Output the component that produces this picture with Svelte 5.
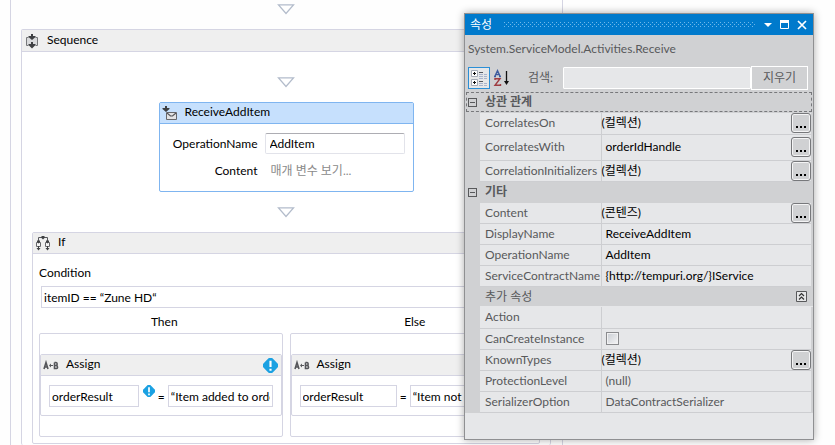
<script>
  const correlation = [
    { name: 'CorrelatesOn', value: '(컬렉션)', flush: true, more: true },
    { name: 'CorrelatesWith', value: 'orderIdHandle', more: true, tall: true },
    { name: 'CorrelationInitializers', value: '(컬렉션)', flush: true, more: true }
  ];
  const misc = [
    { name: 'Content', value: '(콘텐즈)', flush: true, more: true },
    { name: 'DisplayName', value: 'ReceiveAddItem' },
    { name: 'OperationName', value: 'AddItem' },
    { name: 'ServiceContractName', value: '{http://tempuri.org/}IService' }
  ];
  const extra = [
    { name: 'Action', value: '' },
    { name: 'CanCreateInstance', check: true },
    { name: 'KnownTypes', value: '(컬렉션)', flush: true, more: true },
    { name: 'ProtectionLevel', value: '(null)', dim: true },
    { name: 'SerializerOption', value: 'DataContractSerializer', dim: true }
  ];
  const branches = [
    { title: 'Then', to: 'orderResult', value: '“Item added to order”', warn: true },
    { title: 'Else', to: 'orderResult', value: '“Item not added”', warn: false }
  ];
</script>

{#snippet arrow()}
  <svg class="arrow" width="18" height="11" viewBox="0 0 18 11">
    <path d="M1.500 .8H16.500L9 9.500Z" fill="#fff" stroke="#b3bccb" stroke-width="1.300" />
  </svg>
{/snippet}

{#snippet warning(size)}
  <svg width={size} height={size} viewBox="0 0 14 14">
    <path d="M5.500 0h3L10 1.500 12.500 4 14 5.500v3L12.500 10 10 12.500 8.500 14h-3L4 12.500 1.500 10 0 8.500v-3L1.500 4 4 1.500Z" fill="#1ba1e2" />
    <path d="M6 2.500h2v6H6zM6 10h2v2H6z" fill="#fff" />
  </svg>
{/snippet}

{#snippet rows(list)}
  <table>
    <tbody>
      {#each list as p}
        <tr class:tall={p.tall}>
          <th scope="row">{p.name}</th>
          <td class:flush={p.flush} class:dim={p.dim}>
            <div class="cell">
              {#if p.check}
                <input type="checkbox" aria-label={p.name} />
              {:else}
                <span>{p.value}</span>
              {/if}
              {#if p.more}<button class="more" aria-label={p.name}><i></i><i></i><i></i></button>{/if}
            </div>
          </td>
        </tr>
      {/each}
    </tbody>
  </table>
{/snippet}

<main>
  <div class="outer">
    {@render arrow()}
    <section class="box sequence">
      <header>
        <svg width="16" height="16" viewBox="0 0 16 16">
          <path d="M3 4h10v8H3z" fill="#d9dadc" />
          <path d="M4.500 4.500H2.500V12.500H4.500M11.500 4.500H13.500V12.500H11.500" fill="none" stroke="#77787b" />
          <path d="M7 1h2v2h2.500v1L8 7 4.500 4V3H7zM7 9h2v2h2.500v1L8 15.500 4.500 12v-1H7z" fill="#3f4043" />
        </svg>
        <span>Sequence</span>
      </header>
      <div class="flow">
        {@render arrow()}
        <article class="receive">
          <header>
            <svg width="16" height="16" viewBox="0 0 16 16">
              <path d="M4.500 7.500h10v7h-10z" fill="#e3e3e5" stroke="#66676b" />
              <path d="M5 8l3.500 3h2L14 8" fill="none" stroke="#55565a" stroke-width="1.200" />
              <path d="M3 1h2v2h2.500v1L4 7 .5 4V3H3z" fill="#3f4043" />
            </svg>
            <span>ReceiveAddItem</span>
          </header>
          <div class="fields">
            <label for="op">OperationName</label>
            <input id="op" value="AddItem" />
            <span>Content</span>
            <a href="#content">매개 변수 보기...</a>
          </div>
        </article>
        {@render arrow()}
        <section class="box if">
          <header>
            <svg width="16" height="16" viewBox="0 0 16 16">
              <path d="M3.500 6V2.500H12.500V6" fill="none" stroke="#55565a" />
              <path d="M6.500 1h3v2L8 4.500 6.500 3z" fill="#3f4043" />
              <path d="M1.500 7.500h4v4h-4zM10.500 7.500h4v4h-4z" fill="#f4f4f4" stroke="#66676b" />
              <path d="M2 5.500h3v1.500L3.500 8.500 2 7zM11 5.500h3v1.500l-1.500 1.500L11 7zM3 11h1v2h1.500L3.500 15.500 1.500 13H3zM12 11h1v2h1.500l-2 2.500-2-2.500H12z" fill="#3f4043" />
            </svg>
            <span>If</span>
          </header>
          <div class="condition">
            <label for="cond">Condition</label>
            <input id="cond" value="itemID == “Zune HD“" />
          </div>
          <div class="branches">
            {#each branches as b}
              <div class="branch">
                <h2>{b.title}</h2>
                <div class="drop">
                  <article class="box assign">
                    <header>
                      <svg width="16" height="10" viewBox="0 0 16 10">
                        <path d="M1 9L3 2.500L5 9M1.500 7H4.500M11.500 2.500V8.500H13.500Q14.700 8.300 14.500 7 14.500 5.500 13 5.500H11.500M13 5.500Q14.200 5.200 14.200 4 14 2.500 13 2.500H11.500" fill="none" stroke="#55565a" stroke-width="1.600" />
                        <path d="M6 5.500L8 3.500V5H10V6H8V7.500Z" fill="#55565a" />
                      </svg>
                      <span>Assign</span>
                      {#if b.warn}{@render warning(15)}{/if}
                    </header>
                    <div class="expr">
                      <input aria-label="To" value={b.to} />
                      {#if b.warn}<span class="hint">{@render warning(12)}</span>{/if}
                      <span class="eq">=</span>
                      <input class="wide" aria-label="Value" value={b.value} />
                    </div>
                  </article>
                </div>
              </div>
            {/each}
          </div>
        </section>
      </div>
    </section>
  </div>

  <aside>
    <div class="title">
      <h1>속성</h1>
      <svg class="grip" height="6">
        <defs>
          <pattern id="dots" width="4" height="4" patternUnits="userSpaceOnUse">
            <path d="M0 0h1v1H0zM2 2h1v1H2z" fill="#6fb8ea" />
          </pattern>
        </defs>
        <rect width="100%" height="5" fill="url(#dots)" />
      </svg>
      <button aria-label="메뉴"><svg width="10" height="10" viewBox="0 0 10 10"><path d="M1 3h8L5 7z" fill="#fff" /></svg></button>
      <button aria-label="최대화"><svg width="10" height="10" viewBox="0 0 10 10"><path d="M.5 .5h8v8h-8z" fill="none" stroke="#fff" /><path d="M0 0h9v3H0z" fill="#fff" /></svg></button>
      <button aria-label="닫기"><svg width="10" height="10" viewBox="0 0 10 10"><path d="M1 1l8 8M9 1L1 9" stroke="#fff" stroke-width="1.700" /></svg></button>
    </div>
    <p class="type">System.ServiceModel.Activities.Receive</p>
    <div class="tools">
      <button class="tool on" aria-label="범주별">
        <svg width="18" height="18" viewBox="0 0 18 18">
          <path d="M1.500 1.500h6v6h-6zM1.500 10.500h6v6h-6z" fill="#fff" stroke="#a5abb6" />
          <path d="M3 4.500h3M4.500 3v3M3 13.500h3M4.500 12v3" stroke="#111" />
          <path d="M9 3.500h4M9 12.500h4" stroke="#55585f" />
          <path d="M14 5.500h3M9 5.500h4M9 7.500h4M14 7.500h3M14 9.500h3M9 9.500h4M9 14.500h4M14 14.500h3M9 16.500h4M14 16.500h3" stroke="#a9b4cc" />
        </svg>
      </button>
      <button class="tool" aria-label="사전순">
        <svg width="18" height="18" viewBox="0 0 18 18">
          <path d="M1 7.500H3M2 7L4.500 1.500L7 7M6 7.500H8M3 5.500H6" fill="none" stroke="#3d5c9f" stroke-width="1.300" />
          <path d="M2 11V9.800H7L2 16.200H7.500V15" fill="none" stroke="#9f3d42" stroke-width="1.400" />
          <path d="M13.500 2V13" stroke="#111" stroke-width="1.300" />
          <path d="M11 12h5l-2.500 4z" fill="#111" />
        </svg>
      </button>
      <label for="q">검색:</label>
      <input id="q" type="text" />
      <button class="clear">지우기</button>
    </div>
    <h2 class="cat focus"><button class="minus" aria-label="접기"></button>상관 관계</h2>
    {@render rows(correlation)}
    <h2 class="cat"><button class="minus" aria-label="접기"></button>기타</h2>
    {@render rows(misc)}
    <div class="group">
      <h3>추가 속성</h3>
      <button aria-label="접기">
        <svg width="11" height="11" viewBox="0 0 11 11"><path d="M.5 .5h10v10H.5z" fill="#e6e7e8" stroke="#58595b" /><path d="M3 5l2.500-2.500L8 5M3 8.500L5.500 6 8 8.500" fill="none" stroke="#333" stroke-width="1.200" /></svg>
      </button>
    </div>
    {@render rows(extra)}
    <div class="foot"></div>
  </aside>
</main>

<style>
  :global(body) { overflow: hidden; background: #fff; }
  * { box-sizing: border-box; margin: 0; }
  main, input, button {
    font: 12px/16px Lato, "Noto Sans CJK KR", sans-serif;
    color: #000;
  }
  main { position: relative; padding: 0 272px 0 10px; background: #fefefe; height: 100vh; overflow: hidden; }
  svg { display: block; flex: none; }
  button { border: 0; padding: 0; background: none; }
  input { border: 1px solid #d5d5e3; border-radius: 0; padding: 0 2px; background: #fff; min-width: 0; outline: 0; }
  h1, h2, h3 { font-size: 12px; font-weight: 400; line-height: 16px; }

  .outer { display: flex; flex-direction: column; min-height: 100%; padding: 4px 11px 0 10px; border: solid #d5d5e3; border-width: 0 1px; }
  .arrow { align-self: center; }
  .box { border: 1px solid #d5d5e3; border-radius: 2px; background: #fff; }
  header { display: flex; align-items: center; height: 22px; background: #efefef; border-bottom: 1px solid #d5d5e3; }
  header span { padding-bottom: 2px; }
  .sequence { flex: 1; margin-top: 14px; border-bottom: 0; }
  .sequence > header { padding-left: 2px; gap: 7px; }
  .flow { display: flex; flex-direction: column; padding: 25px 10px 0; }

  .receive { align-self: center; width: 255px; margin: 14px 0 15px; border: 1px solid #7fb5f0; border-radius: 2px; background: #fff; }
  .receive header { height: 21px; padding-left: 2px; gap: 7px; background: #c6e0fd; border-color: #7fb5f0; }
  .fields { display: grid; grid-template-columns: 98px 1fr; column-gap: 7px; row-gap: 7px; align-items: center; padding: 9px 8px 10px 0; }
  .fields label, .fields span { text-align: right; }
  .fields input { height: 21px; padding: 0 4px; border-color: #adadb3 #e2e3ea #e2e3ea; border-radius: 2px; }
  .fields a { padding-left: 6px; color: #8a8a8a; text-decoration: none; line-height: 20px; }

  .if { margin-top: 14px; padding-bottom: 6px; }
  .if > header { height: 21px; padding-left: 2px; gap: 7px; }
  .condition { display: flex; flex-direction: column; gap: 5px; padding: 11px 6px 0; }
  .condition input { height: 22px; margin: 0 2px; }
  .branches { display: flex; gap: 7px; padding: 6px 6px 0; }
  .branch { flex: 1; min-width: 0; }
  h2 { text-align: center; }
  .branch h2 { margin-bottom: 3px; padding-left: 7px; }
  .drop { border: 1px solid #d5d5e3; border-radius: 2px; padding: 20px 0; }
  .assign header { height: 21px; padding: 0 3px 0 2px; gap: 7px; }
  .assign header span { flex: 1; }
  .expr { display: flex; align-items: center; padding: 9px 8px 8px; }
  .expr input { flex: 90 1 0; height: 22px; padding: 0 2px; }
  .expr input.wide { flex: 106 1 0; }
  .expr .eq { padding: 2px 3px 0; width: 13px; text-align: center; }
  .hint { align-self: flex-start; margin-left: 4px; }

  aside { position: absolute; top: 13px; right: 21px; width: 350px; border: 1px solid #8f9092; background: #d0d1d3; color: #58595b; box-shadow: 0 0 8px #0005; }
  .title { display: flex; align-items: center; height: 21px; padding: 0 6px 0 5px; gap: 7px; background: #007acc; color: #fff; }
  .grip { flex: 1; min-width: 0; margin: 0 1px 0 5px; }
  .type { padding: 6px 3px; height: 31px; }
  .tools { display: flex; align-items: center; padding: 0 5px 0 3px; height: 23px; }
  .tool { display: grid; place-items: center; width: 22px; height: 22px; margin-right: 1px; }
  .tool.on { border: 1px solid #2b8fd6; background: #e6e7e8; }
  .tools label { margin: 0 10px 0 14px; }
  .tools input { flex: 1; height: 22px; border: 1px solid #fff; background: #e6e7e9; border-radius: 1px; }
  .clear { width: 57px; height: 24px; border: 1px solid #fff; color: #58595b; }
  .cat { display: flex; align-items: center; gap: 8px; height: 21px; padding-left: 3px; font-weight: 700; text-align: left; }
  .focus { height: 20px; margin: 3px 1px 1px; padding-left: 2px; outline: 1px dashed #77787b; outline-offset: -1px; }
  .minus { width: 9px; height: 9px; border: 1px solid #58595b; background: linear-gradient(#58595b, #58595b) center / 5px 1px no-repeat; }
  table { width: calc(100% - 17px); margin-left: 15px; border-collapse: collapse; table-layout: fixed; background: #e6e7e9; }
  tr { height: 21px; border-bottom: 1px solid #cdced1; }
  tr.tall { height: 26px; }
  th { width: 121px; padding: 0 0 0 5px; font-weight: 400; text-align: left; white-space: nowrap; border-right: 1px solid #cdced1; }
  td { padding: 0 0 0 4px; color: #000; }
  td.flush { padding-left: 0; }
  td.dim { color: #58595b; }
  .cell { display: flex; align-items: center; justify-content: space-between; height: 20px; }
  .more { display: flex; align-items: flex-end; justify-content: center; gap: 2px; width: 20px; height: 20px; padding-bottom: 4px; border: 1px solid #77787b; border-radius: 3px; background: #d0d1d3; box-shadow: inset 0 0 0 1px #f4f4f5; }
  .more i { width: 2px; height: 2px; background: #000; }
  td input { appearance: none; width: 13px; height: 13px; border: 1px solid #8a8b8e; background: linear-gradient(135deg, #c9cdd3, #f5f5f6); box-shadow: inset 0 0 0 1px #f1f1f2; }
  .group { display: flex; align-items: center; justify-content: space-between; height: 20px; margin-left: 15px; padding: 0 6px 0 5px; border-bottom: 1px solid #e6e7e9; }
  .foot { height: 26px; background: #e6e7e9; }
</style>
